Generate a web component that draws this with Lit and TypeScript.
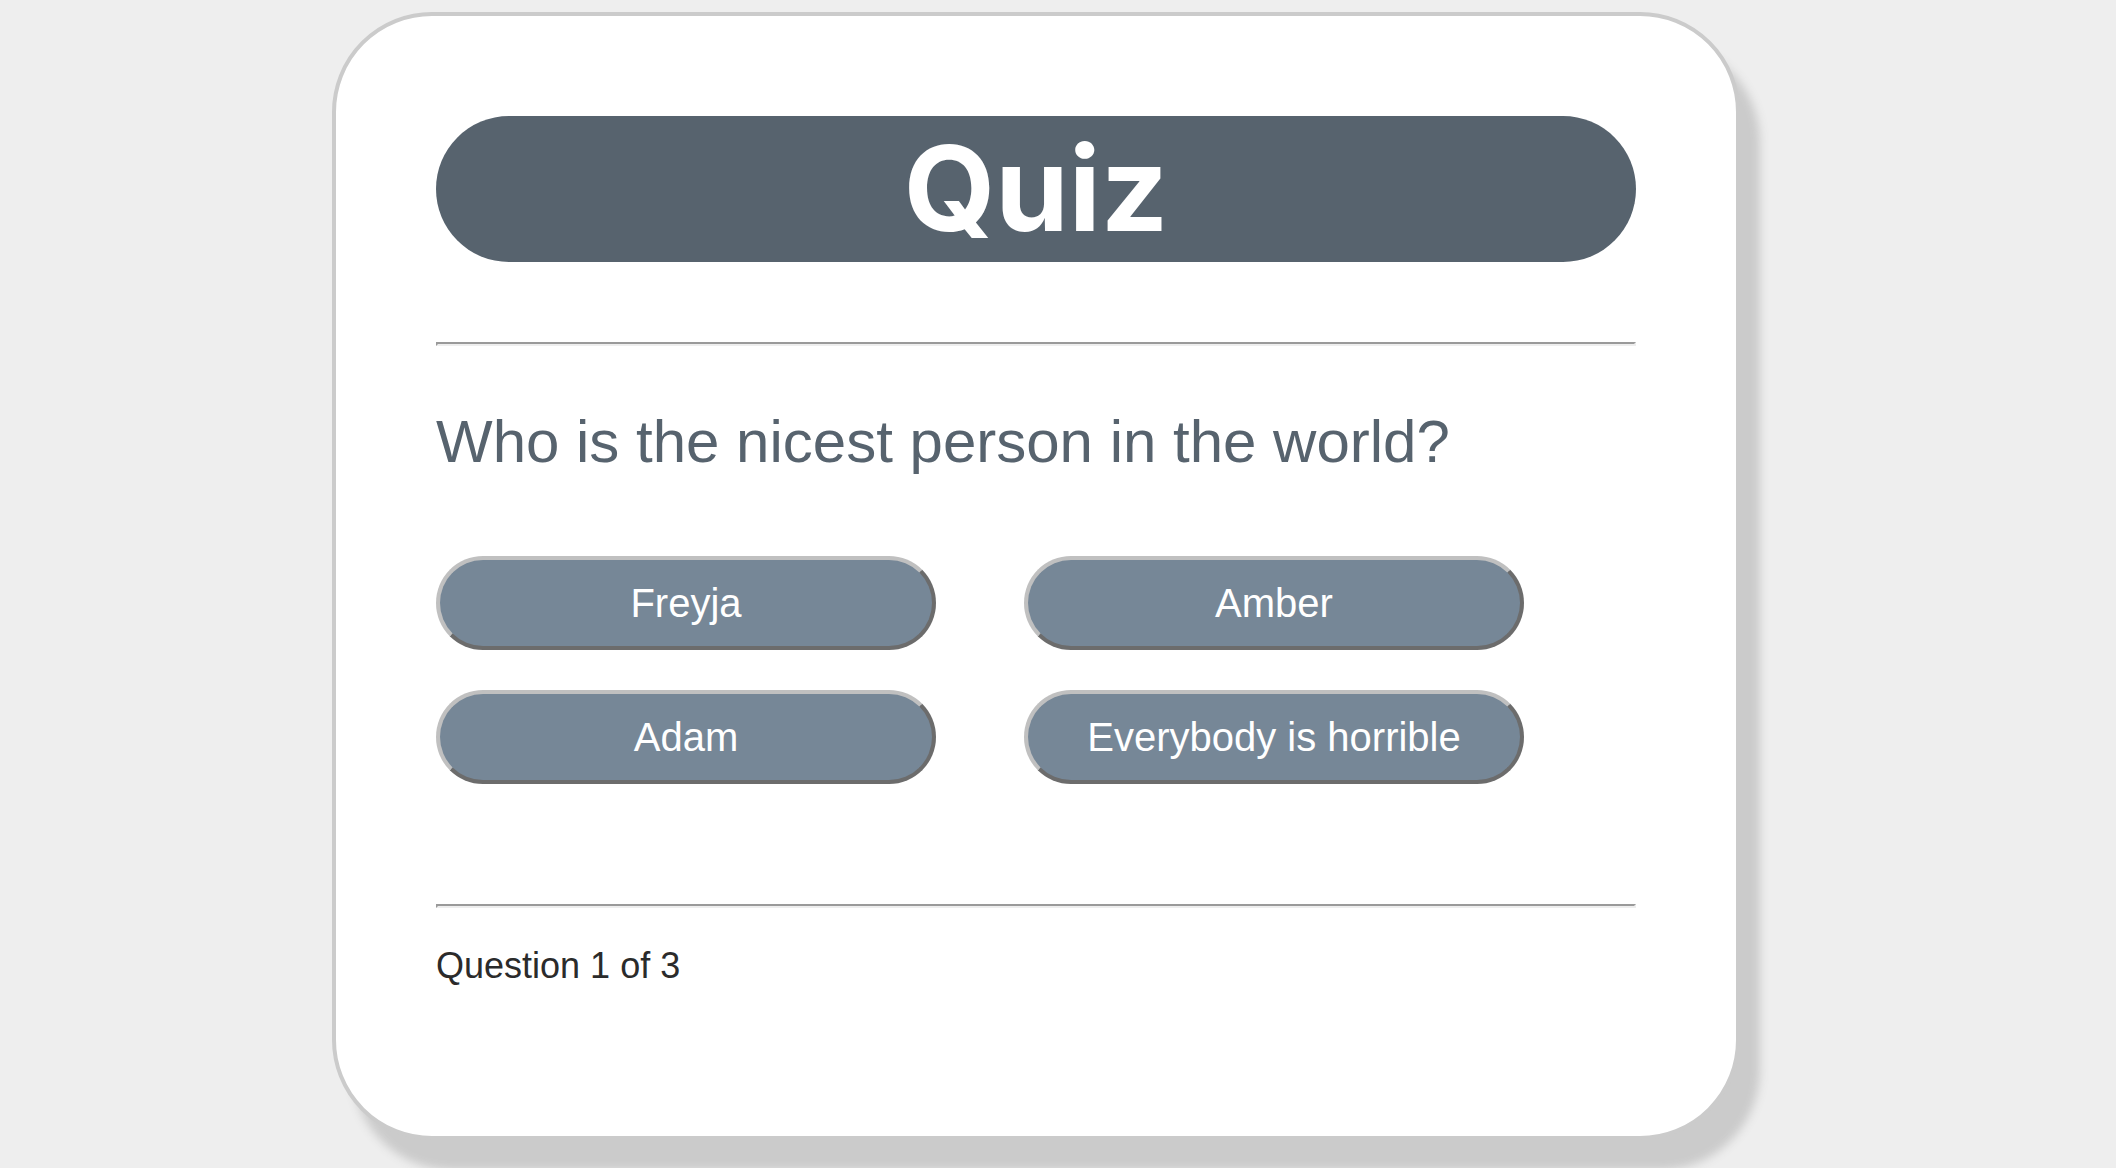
import { LitElement, css, html } from "lit";
import { customElement, property, state } from "lit/decorators.js";

interface Question {
  text: string;
  choices: string[];
}

@customElement("quiz-choices")
export class QuizChoices extends LitElement {
  @property({ attribute: false }) choices: string[] = [];

  static styles = css`
    :host {
      display: block;
    }
    .choices {
      display: grid;
      grid-template-columns: repeat(2, minmax(0, 1fr));
      gap: 40px 88px;
      max-width: 1088px;
    }
    .choice {
      box-sizing: border-box;
      min-height: 94px;
      margin: 0;
      padding: 0 16px;
      border: 4px solid;
      border-color: #c0c0c0 #6c6c6c #6c6c6c #c0c0c0;
      border-radius: 47px;
      background: #768797;
      color: #fff;
      font: 40px/46px Helvetica, "Liberation Sans", Arial, sans-serif;
      cursor: pointer;
    }
    .choice:hover {
      background: #57636e;
    }
  `;

  render() {
    return html`
      <div class="choices">
        ${this.choices.map(
          (choice) => html`<button class="choice" type="button">${choice}</button>`
        )}
      </div>
    `;
  }
}

@customElement("app-root")
export class AppRoot extends LitElement {
  @state() private question: Question = {
    text: "Who is the nicest person in the world?",
    choices: ["Freyja", "Amber", "Adam", "Everybody is horrible"],
  };
  @state() private current = 1;
  @state() private total = 3;

  static styles = css`
    :host {
      display: block;
      box-sizing: border-box;
      min-height: 100vh;
      padding: 12px 44px 28px 0;
      background: #eee;
      font-family: Helvetica, "Liberation Sans", Arial, sans-serif;
    }
    .card {
      display: flex;
      flex-direction: column;
      box-sizing: border-box;
      max-width: 1408px;
      margin: 0 auto;
      padding: 100px 100px 148px;
      border: 4px solid #cbcbcb;
      border-radius: 100px;
      background: #fff;
      box-shadow: 20px 30px 10px #cbcbcb;
    }
    .title {
      margin: 0 0 80px;
      padding-bottom: 2px;
      border-radius: 73px;
      background: #57636e;
      color: #fff;
      font-family: Inter, Helvetica, "Liberation Sans", sans-serif;
      font-size: 118px;
      font-optical-sizing: none;
      line-height: 144px;
      font-weight: 700;
      text-align: center;
    }
    .rule {
      width: 100%;
      box-sizing: border-box;
      height: 4px;
      margin: 0;
      border: 2px solid;
      border-color: #9a9a9a #eee #eee #9a9a9a;
    }
    .question {
      margin: 60px 0 78px;
      color: #57636e;
      font-size: 60px;
      line-height: 72px;
      font-weight: 400;
    }
    .answers {
      margin-bottom: 120px;
    }
    .progress {
      margin: 36px 0 0;
      color: #2b2b2b;
      font-size: 36px;
      line-height: 44px;
    }
  `;

  render() {
    return html`
      <main class="card">
        <h1 class="title">Quiz</h1>
        <hr class="rule" />
        <h2 class="question">${this.question.text}</h2>
        <quiz-choices class="answers" .choices=${this.question.choices}></quiz-choices>
        <hr class="rule" />
        <p class="progress">Question ${this.current} of ${this.total}</p>
      </main>
    `;
  }
}
